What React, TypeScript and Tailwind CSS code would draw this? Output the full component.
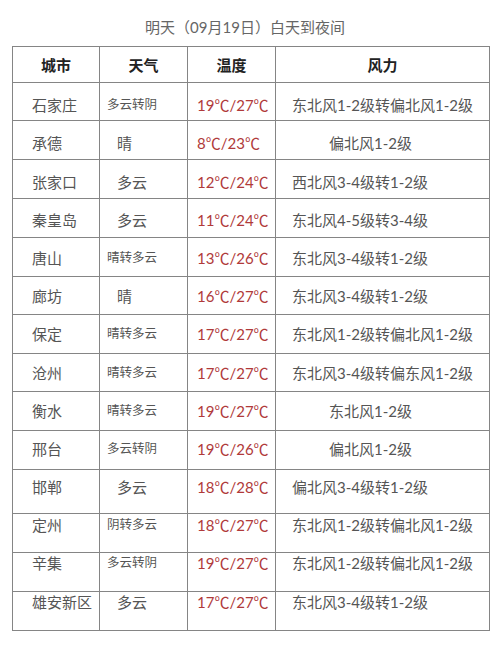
import React from "react";

type Row = {
  city: string;
  weather: string;
  small: boolean;
  temp: string;
  wind: string;
  short: boolean;
  h: string;
  pt: string;
};

const rows: Row[] = [
  { city: "石家庄", weather: "多云转阴", small: true, temp: "19℃/27℃", wind: "东北风1-2级转偏北风1-2级", short: false, h: "h-[38px]", pt: "pt-[12px]" },
  { city: "承德", weather: "晴", small: false, temp: "8℃/23℃", wind: "偏北风1-2级", short: true, h: "h-[39px]", pt: "pt-[12px]" },
  { city: "张家口", weather: "多云", small: false, temp: "12℃/24℃", wind: "西北风3-4级转1-2级", short: false, h: "h-[39px]", pt: "pt-[12px]" },
  { city: "秦皇岛", weather: "多云", small: false, temp: "11℃/24℃", wind: "东北风4-5级转3-4级", short: false, h: "h-[39px]", pt: "pt-[11px]" },
  { city: "唐山", weather: "晴转多云", small: true, temp: "13℃/26℃", wind: "东北风3-4级转1-2级", short: false, h: "h-[39px]", pt: "pt-[10px]" },
  { city: "廊坊", weather: "晴", small: false, temp: "16℃/27℃", wind: "东北风3-4级转1-2级", short: false, h: "h-[38px]", pt: "pt-[9px]" },
  { city: "保定", weather: "晴转多云", small: true, temp: "17℃/27℃", wind: "东北风1-2级转偏北风1-2级", short: false, h: "h-[39px]", pt: "pt-[9px]" },
  { city: "沧州", weather: "晴转多云", small: true, temp: "17℃/27℃", wind: "东北风3-4级转偏东风1-2级", short: false, h: "h-[38px]", pt: "pt-[9px]" },
  { city: "衡水", weather: "晴转多云", small: true, temp: "19℃/27℃", wind: "东北风1-2级", short: true, h: "h-[39px]", pt: "pt-[9px]" },
  { city: "邢台", weather: "多云转阴", small: true, temp: "19℃/26℃", wind: "偏北风1-2级", short: true, h: "h-[39px]", pt: "pt-[8px]" },
  { city: "邯郸", weather: "多云", small: false, temp: "18℃/28℃", wind: "偏北风3-4级转1-2级", short: false, h: "h-[44px]", pt: "pt-[7px]" },
  { city: "定州", weather: "阴转多云", small: true, temp: "18℃/27℃", wind: "东北风1-2级转偏北风1-2级", short: false, h: "h-[39px]", pt: "pt-[1px]" },
  { city: "辛集", weather: "多云转阴", small: true, temp: "19℃/27℃", wind: "东北风1-2级转偏北风1-2级", short: false, h: "h-[39px]", pt: "pt-[0px]" },
  { city: "雄安新区", weather: "多云", small: false, temp: "17℃/27℃", wind: "东北风3-4级转1-2级", short: false, h: "h-[39px]", pt: "pt-[0px]" },
];

const font = { fontFamily: '"Lato", "Noto Sans CJK SC", sans-serif' };

export default function App() {
  return (
    <div className="w-[500px] h-[647px] bg-white overflow-hidden" style={font}>
      <div className="pt-[17px] h-[46px] pr-[10px] text-center text-[15px] leading-[20px] text-[#666666]">
        明天（09月19日）白天到夜间
      </div>
      <div className="ml-[12px] w-[478px] border-l border-t border-[#858585]">
        <div className="grid grid-cols-[87px_88px_88px_214px] h-[36px]">
          {["城市", "天气", "温度", "风力"].map((t) => (
            <div
              key={t}
              className="border-r border-b border-[#858585] flex items-center justify-center text-[15px] font-bold text-[#222222] leading-[20px]"
            >
              {t}
            </div>
          ))}
        </div>
        {rows.map((r) => (
          <div key={r.city} className={`grid grid-cols-[87px_88px_88px_214px] ${r.h}`}>
            <div className={`border-r border-b border-[#858585] pl-[19px] ${r.pt} text-[15px] leading-[20px] text-[#555555] whitespace-nowrap`}>
              {r.city}
            </div>
            <div
              className={`border-r border-b border-[#858585] ${r.pt} leading-[20px] text-[#555555] whitespace-nowrap ${
                r.small ? "pl-[7px] text-[12.5px]" : "pl-[17px] text-[15px]"
              }`}
            >
              {r.weather}
            </div>
            <div className={`border-r border-b border-[#858585] pl-[9px] ${r.pt} text-[15px] leading-[20px] text-[#b03a3a] whitespace-nowrap`}>
              {r.temp}
            </div>
            <div
              className={`border-r border-b border-[#858585] ${r.pt} text-[15px] leading-[20px] text-[#555555] whitespace-nowrap ${
                r.short ? "pl-[53px]" : "pl-[16px]"
              }`}
            >
              {r.wind}
            </div>
          </div>
        ))}
      </div>
    </div>
  );
}
